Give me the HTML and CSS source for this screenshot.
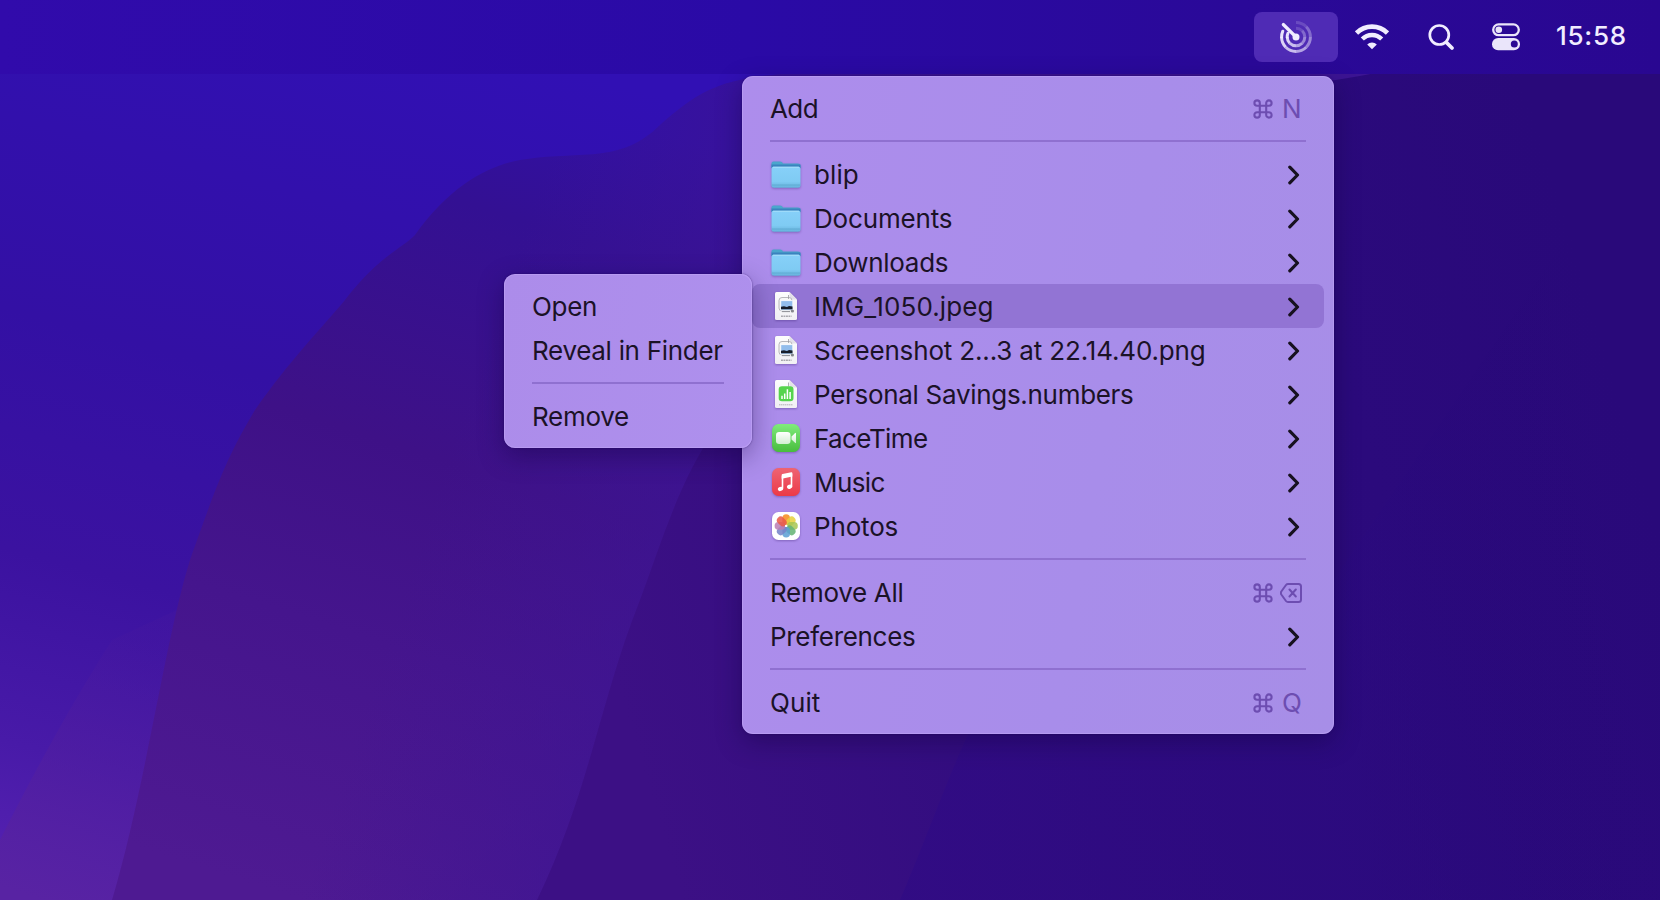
FILE: index.html
```html
<!DOCTYPE html>
<html lang="en">
<head>
<meta charset="utf-8">
<title>Menu bar</title>
<link rel="stylesheet" href="styles.css">
</head>
<body>
<svg width="0" height="0" class="defs" aria-hidden="true">
  <defs>
    <linearGradient id="folderFront" x1="0" y1="0" x2="0" y2="1"><stop offset="0" stop-color="#86d0f9"/><stop offset=".7" stop-color="#7fcbf3"/><stop offset="1" stop-color="#66b3dc"/></linearGradient>
    <linearGradient id="green" x1="0" y1="0" x2="0" y2="1"><stop offset="0" stop-color="#80ec7c"/><stop offset="1" stop-color="#48bd3d"/></linearGradient>
    <linearGradient id="red" x1="0" y1="0" x2="0" y2="1"><stop offset="0" stop-color="#ee6473"/><stop offset="1" stop-color="#ec3a47"/></linearGradient>
    <linearGradient id="cam" x1="0" y1="0" x2="0" y2="1"><stop offset="0" stop-color="#fff"/><stop offset="1" stop-color="#d3efd2"/></linearGradient>
    <linearGradient id="paper" x1="0" y1="0" x2="0" y2="1"><stop offset="0" stop-color="#fdfdfd"/><stop offset="1" stop-color="#f1f0f4"/></linearGradient>
    <symbol id="folder" viewBox="0 0 32 32">
      <path d="M1.500 5.500Q1.500 3.500 3.500 3.500H10q1.500 0 2.300 1l.7.900H28q2.500 0 2.500 2.300V10h-29z" fill="#4aa6cc"/>
      <path d="M1.500 6.500H30.500V10H1.500z" fill="#3a83be"/>
      <path d="M1.500 10.700Q1.500 8.800 3.500 8.800H28.500Q30.500 8.800 30.500 10.700V27.200Q30.500 29.700 28 29.700H4Q1.500 29.700 1.500 27.200z" fill="url(#folderFront)"/>
      <path d="M2 27h28" stroke="#559fc6" stroke-width="1" opacity=".6"/>
      <path d="M3 9.200h26" stroke="#b4e3fc" stroke-width=".8"/>
    </symbol>
    <symbol id="sheet" viewBox="0 0 32 32">
      <path d="M5 3.500Q5 2 6.500 2H19.500L27 9.500V28.500Q27 30 25.500 30H6.500Q5 30 5 28.500z" fill="url(#paper)"/>
      <path d="M19.500 2v5.500q0 2 2 2H27z" fill="#e3e1e9"/>
    </symbol>
    <symbol id="picture" viewBox="0 0 32 32">
      <use href="#sheet"/>
      <rect x="9" y="7.500" width="13" height="13.500" rx="3" fill="#f7f7f7" stroke="#b0b0b4" stroke-width=".9"/>
      <path d="M18.500 5v4" stroke="#9a9aa0" stroke-width=".8"/>
      <rect x="10.800" y="10.700" width="12" height="9.500" fill="#92bdec" stroke="#fff" stroke-width=".8"/>
      <path d="M11 16.700l3-.4 3 .8 2-1 3.500 .5v2.600h-11.500z" fill="#171d29"/>
      <path d="M12 21.600h8" stroke="#8f9096" stroke-width="1"/><circle cx="22.400" cy="21" r="1.600" fill="#85878c"/>
      <path d="M11 26.300h10.500" stroke="#a8a7ad" stroke-width="1.400" stroke-dasharray="1.900 .6"/>
    </symbol>
    <symbol id="numbers" viewBox="0 0 32 32">
      <use href="#sheet"/>
      <path d="M18.500 4.500v4" stroke="#9a9aa0" stroke-width=".8"/>
      <rect x="8.700" y="8.300" width="14.800" height="15" rx="3.300" fill="#56d44d"/>
      <path d="M12 21v-3.200M14.700 21v-5.500M17.400 21v-9.700M20.100 21v-7" stroke="#fff" stroke-width="1.500"/>
      <path d="M9 26.800h14" stroke="#b2b1b6" stroke-width="1" stroke-dasharray="1.500 .5"/>
    </symbol>
    <symbol id="facetime" viewBox="0 0 32 32">
      <rect x="2" y="2" width="28" height="28" rx="6.500" fill="url(#green)"/>
      <rect x="6" y="10" width="14.500" height="12" rx="3.200" fill="url(#cam)"/>
      <path d="M21.500 14.500L25 11.200q1-.9 1 .4v8.800q0 1.300-1 .4l-3.500-3.300z" fill="url(#cam)"/>
    </symbol>
    <symbol id="music" viewBox="0 0 32 32">
      <rect x="2" y="2" width="28" height="28" rx="6.500" fill="url(#red)"/>
      <path d="M12.500 22.500V10.500L21.500 8.500V20.500" fill="none" stroke="#fff" stroke-width="1.600"/>
      <path d="M11.700 9Q11.700 8.200 12.500 8L21.300 6.300Q22.300 6.100 22.300 7V10.500L11.700 12.700z" fill="#fff"/>
      <ellipse cx="10.500" cy="22.900" rx="2.700" ry="2.100" transform="rotate(-20 10.500 22.900)" fill="#fff"/>
      <ellipse cx="19.600" cy="20.700" rx="2.700" ry="2.100" transform="rotate(-20 19.600 20.700)" fill="#fff"/>
    </symbol>
    <symbol id="photos" viewBox="0 0 32 32">
      <rect x="2" y="2" width="28" height="28" rx="6.500" fill="#fff"/>
      <g opacity=".9">
        <rect x="12.400" y="4.300" width="7.600" height="10.700" rx="3.800" fill="#f7922a"/>
        <rect x="12.400" y="4.300" width="7.600" height="10.700" rx="3.800" fill="#e4cc2c" fill-opacity=".88" transform="rotate(45 16.200 15.900)"/>
        <rect x="12.400" y="4.300" width="7.600" height="10.700" rx="3.800" fill="#9fc043" fill-opacity=".88" transform="rotate(90 16.200 15.900)"/>
        <rect x="12.400" y="4.300" width="7.600" height="10.700" rx="3.800" fill="#56ad66" fill-opacity=".88" transform="rotate(135 16.200 15.900)"/>
        <rect x="12.400" y="4.300" width="7.600" height="10.700" rx="3.800" fill="#4c96cf" fill-opacity=".88" transform="rotate(180 16.200 15.900)"/>
        <rect x="12.400" y="4.300" width="7.600" height="10.700" rx="3.800" fill="#6877c4" fill-opacity=".88" transform="rotate(225 16.200 15.900)"/>
        <rect x="12.400" y="4.300" width="7.600" height="10.700" rx="3.800" fill="#b471ae" fill-opacity=".88" transform="rotate(270 16.200 15.900)"/>
        <rect x="12.400" y="4.300" width="7.600" height="10.700" rx="3.800" fill="#e84a36" fill-opacity=".88" transform="rotate(315 16.200 15.900)"/>
      </g>
      <circle cx="16.200" cy="15.900" r="1.200" fill="#fff"/>
    </symbol>
    <symbol id="chevron" viewBox="0 0 14 20"><path d="M2.800 2.200L10.500 10L2.800 17.800" fill="none" stroke="#17111f" stroke-width="3.200" stroke-linecap="round" stroke-linejoin="round"/></symbol>
    <symbol id="command" viewBox="0 0 20 20"><path d="M6.800 6.800H13.200V13.200H6.800zM6.800 6.800H4.100A2.700 2.700 0 1 1 6.800 4.100zM13.200 6.800V4.100A2.700 2.700 0 1 1 15.900 6.800zM13.200 13.200H15.900A2.700 2.700 0 1 1 13.200 15.900zM6.800 13.200V15.900A2.700 2.700 0 1 1 4.100 13.200z" fill="none" stroke="currentColor" stroke-width="2.100"/></symbol>
    <symbol id="erase" viewBox="0 0 22 20"><path d="M8 1H18.500Q21 1 21 3.500V16.500Q21 19 18.500 19H8Q6.800 19 6 18L1.300 11.500Q.4 10 1.300 8.500L6 2Q6.800 1 8 1zM9.500 6.500L15.800 13.500M15.800 6.500L9.500 13.500" fill="none" stroke="currentColor" stroke-width="2" stroke-linecap="round" stroke-linejoin="round"/></symbol>
  </defs>
</svg>

<div class="desktop">
  <svg class="wallpaper" viewBox="0 0 1660 900" preserveAspectRatio="none" aria-hidden="true">
    <defs>
      <linearGradient id="sky" gradientUnits="userSpaceOnUse" x1="300" y1="0" x2="60" y2="900"><stop offset="0" stop-color="#3110b4"/><stop offset=".4" stop-color="#3310a4"/><stop offset=".65" stop-color="#3b12a0"/><stop offset=".85" stop-color="#481aa8"/><stop offset="1" stop-color="#5622b2"/></linearGradient>
      <linearGradient id="hillA" gradientUnits="userSpaceOnUse" x1="560" y1="100" x2="300" y2="900"><stop offset="0" stop-color="#3210a4"/><stop offset=".15" stop-color="#331093"/><stop offset=".45" stop-color="#3e1187"/><stop offset=".68" stop-color="#45158d"/><stop offset="1" stop-color="#4e1a92"/></linearGradient>
      <linearGradient id="fadeA" gradientUnits="userSpaceOnUse" x1="400" y1="600" x2="760" y2="720"><stop offset="0" stop-color="#3f1593" stop-opacity="0"/><stop offset="1" stop-color="#3c1493"/></linearGradient>
      <linearGradient id="hillB" gradientUnits="userSpaceOnUse" x1="640" y1="760" x2="1640" y2="460"><stop offset="0" stop-color="#3c1085"/><stop offset=".4" stop-color="#300c7e"/><stop offset=".75" stop-color="#2b0a7c"/><stop offset="1" stop-color="#29097a"/></linearGradient>
      <linearGradient id="hillC" gradientUnits="userSpaceOnUse" x1="930" y1="820" x2="1640" y2="720"><stop offset="0" stop-color="#300b84" stop-opacity=".8"/><stop offset=".6" stop-color="#2b0a80" stop-opacity=".5"/><stop offset="1" stop-color="#250675" stop-opacity="0"/></linearGradient>
      <linearGradient id="corner" gradientUnits="userSpaceOnUse" x1="130" y1="640" x2="40" y2="900"><stop offset="0" stop-color="#4b1a9c" stop-opacity=".2"/><stop offset="1" stop-color="#5823a3"/></linearGradient>
    </defs>
    <rect width="1660" height="900" fill="url(#sky)"/>
    <path d="M0 840C40 760 80 690 112 640L220 590L120 900H0z" fill="url(#corner)"/>
    <path d="M112 900C145 790 165 640 190 560C215 490 225 460 255 410C290 360 320 330 345 300C380 255 400 250 415 235C450 185 490 165 520 160C580 150 620 165 660 125C700 90 720 80 780 74H1660V900z" fill="url(#hillA)"/>
    <path d="M112 900C145 790 165 640 190 560C215 490 225 460 255 410C290 360 320 330 345 300C380 255 400 250 415 235C450 185 490 165 520 160C580 150 620 165 660 125C700 90 720 80 780 74H1660V900z" fill="url(#fadeA)"/>
    <path d="M537 900C590 790 600 700 640 600C670 520 690 440 760 380L1000 120Q1300 90 1390 70H1660V900z" fill="url(#hillB)"/>
    <path d="M900 900C930 830 950 770 975 720L1000 600H1320L1660 100V900z" fill="url(#hillC)"/>
  </svg>

  <header class="menubar">
    <button class="status active" aria-label="Blip">
      <svg width="34" height="34" viewBox="0 0 34 34" fill="none" stroke="#f1edff">
        <g stroke-width="3">
          <path d="M3.800 11.200Q2.600 14 2.600 17M9 13.200Q8.200 15 8.200 17" opacity=".95" stroke-linecap="round"/>
          <path d="M2.600 17A14.400 14.400 0 0 0 6.800 27.200M8.200 17A8.800 8.800 0 0 0 10.800 23.200" opacity=".88"/>
          <path d="M6.800 27.200A14.400 14.400 0 0 0 17 31.400M10.800 23.200A8.800 8.800 0 0 0 17 25.800" opacity=".76"/>
          <path d="M17 31.400A14.400 14.400 0 0 0 27.200 27.200M17 25.800A8.800 8.800 0 0 0 23.200 23.200" opacity=".62"/>
          <path d="M27.200 27.200A14.400 14.400 0 0 0 31.400 17M23.200 23.200A8.800 8.800 0 0 0 25.800 17" opacity=".48"/>
          <path d="M31.400 17A14.400 14.400 0 0 0 27.200 6.800M25.800 17A8.800 8.800 0 0 0 23.200 10.800" opacity=".32"/>
          <path d="M27.200 6.800A14.400 14.400 0 0 0 17 2.600M23.200 10.800A8.800 8.800 0 0 0 17 8.200" opacity=".17"/>
        </g>
        <path d="M4.300 4.500L17 17" stroke-width="3.200" stroke-linecap="round"/><circle cx="17" cy="17" r="3.500" fill="#f1edff" stroke="none"/>
      </svg>
    </button>
    <svg class="wifi" width="34" height="26" viewBox="0 0 34 26" fill="none" stroke="#f1edff">
      <path d="M1.500 9.100A22 22 0 0 1 32.500 9.100" stroke-width="4.700"/>
      <path d="M7.300 15A13.700 13.700 0 0 1 26.700 15" stroke-width="4.400"/>
      <path d="M17 25.200L12.200 20.400A6.800 6.800 0 0 1 21.800 20.400z" fill="#f1edff" stroke="none"/>
    </svg>
    <svg class="search" width="28" height="28" viewBox="0 0 28 28" fill="none" stroke="#f1edff" stroke-linecap="round">
      <circle cx="12.300" cy="12" r="9.500" stroke-width="2.700"/><path d="M19.500 19.500L25 25" stroke-width="3.800"/>
    </svg>
    <svg class="control" width="28" height="28" viewBox="0 0 28 28">
      <rect x="1.200" y="1.400" width="25.600" height="10.800" rx="5.400" fill="none" stroke="#eae5fa" stroke-width="2.300"/><circle cx="6.800" cy="6.800" r="3.300" fill="#eae5fa"/>
      <rect x="0" y="15" width="28" height="12.300" rx="6.100" fill="#eae5fa"/><circle cx="22.300" cy="21.100" r="3.500" fill="#2c0a94"/>
    </svg>
    <time class="clock">15:58</time>
  </header>

  <nav class="menu main-menu">
    <div class="row"><span class="label tight">Add</span><span class="keys"><svg class="cmd"><use href="#command"/></svg><span class="key">N</span></span></div>
    <hr>
    <div class="row"><svg class="icon"><use href="#folder"/></svg><span class="label open">blip</span><svg class="chev"><use href="#chevron"/></svg></div>
    <div class="row"><svg class="icon"><use href="#folder"/></svg><span class="label loose">Documents</span><svg class="chev"><use href="#chevron"/></svg></div>
    <div class="row"><svg class="icon"><use href="#folder"/></svg><span class="label">Downloads</span><svg class="chev"><use href="#chevron"/></svg></div>
    <div class="row selected"><svg class="icon"><use href="#picture"/></svg><span class="label open">IMG_1050.jpeg</span><svg class="chev"><use href="#chevron"/></svg></div>
    <div class="row"><svg class="icon"><use href="#picture"/></svg><span class="label loose">Screenshot 2...3 at 22.14.40.png</span><svg class="chev"><use href="#chevron"/></svg></div>
    <div class="row"><svg class="icon"><use href="#numbers"/></svg><span class="label">Personal Savings.numbers</span><svg class="chev"><use href="#chevron"/></svg></div>
    <div class="row"><svg class="icon"><use href="#facetime"/></svg><span class="label tight">FaceTime</span><svg class="chev"><use href="#chevron"/></svg></div>
    <div class="row"><svg class="icon"><use href="#music"/></svg><span class="label tight">Music</span><svg class="chev"><use href="#chevron"/></svg></div>
    <div class="row"><svg class="icon"><use href="#photos"/></svg><span class="label loose">Photos</span><svg class="chev"><use href="#chevron"/></svg></div>
    <hr>
    <div class="row"><span class="label">Remove All</span><span class="keys"><svg class="cmd"><use href="#command"/></svg><svg class="erase"><use href="#erase"/></svg></span></div>
    <div class="row"><span class="label">Preferences</span><svg class="chev"><use href="#chevron"/></svg></div>
    <hr>
    <div class="row"><span class="label open">Quit</span><span class="keys"><svg class="cmd"><use href="#command"/></svg><span class="key">Q</span></span></div>
  </nav>

  <nav class="menu sub-menu">
    <div class="row"><span class="label">Open</span></div>
    <div class="row"><span class="label">Reveal in Finder</span></div>
    <hr>
    <div class="row"><span class="label">Remove</span></div>
  </nav>
</div>
</body>
</html>
```
FILE: styles.css
```css
* { box-sizing: border-box; }
body { margin: 0; font-family: Inter, "Liberation Sans", sans-serif; }
.defs { position: absolute; }
.desktop { position: relative; width: 1660px; height: 900px; overflow: hidden; background: #2c0a94; }
.wallpaper { position: absolute; inset: 0; width: 100%; height: 100%; }

.menubar {
  position: relative;
  display: flex;
  align-items: center;
  justify-content: flex-end;
  height: 74px;
  padding-right: 34px;
  background: linear-gradient(90deg, #310bab 0, #2a0aa6 45%, #2a0998 75%, #290791 100%);
}
.status {
  display: flex;
  align-items: center;
  justify-content: center;
  width: 84px;
  height: 50px;
  padding: 0;
  border: 0;
  border-radius: 8px;
  background: #4f2bb5;
}
.wifi { margin-left: 17px; }
.search { margin-left: 38px; }
.control { margin-left: 37px; }
.clock {
  width: 70px;
  margin-left: 36px;
  padding-bottom: 2px;
  color: #f1edff;
  font-size: 26px;
  font-weight: 500;
  line-height: 44px;
  letter-spacing: .75px;
  white-space: nowrap;
}

.menu {
  position: absolute;
  padding: 10px;
  border-radius: 11px;
  background: linear-gradient(100deg, #ad8dec 0, #a88dea 60%, #a78ee7 100%);
  box-shadow: 0 8px 26px rgba(15, 0, 55, .38), 0 0 2px rgba(30, 5, 90, .6), inset 0 0 0 1px rgba(205, 180, 255, .35);
  color: #1b1227;
}
.main-menu { top: 76px; left: 742px; width: 592px; }
.sub-menu { top: 274px; left: 504px; width: 248px; background: linear-gradient(100deg, #ac8cea, #ae90ed); }
.row { display: flex; align-items: center; height: 44px; padding: 0 18px; border-radius: 8px; }
.selected { background: #9274d4; }
.label { flex: 1; padding-top: 2px; font-size: 26px; line-height: 42px; letter-spacing: -.3px; white-space: nowrap; }
.label.tight { letter-spacing: -.6px; }
.label.loose { letter-spacing: -.16px; }
.label.open { letter-spacing: .1px; }
.menu hr { height: 2px; margin: 10px 18px; border: 0; background: #8f70d0; }
.icon { flex: none; width: 32px; height: 32px; margin-right: 12px; filter: drop-shadow(0 1px 1px rgba(50, 20, 100, .35)); }
.chev { flex: none; width: 14px; height: 20px; margin-top: 2px; margin-right: 5px; }
.keys { display: flex; align-items: center; gap: 9px; color: #6d4db1; }
.cmd { width: 20px; height: 20px; margin-top: 1px; }
.erase { width: 22px; height: 20px; margin-top: 1px; margin-right: 4px; margin-left: -2px; }
.key { width: 24px; padding-top: 2px; font-size: 26px; line-height: 42px; }
```
